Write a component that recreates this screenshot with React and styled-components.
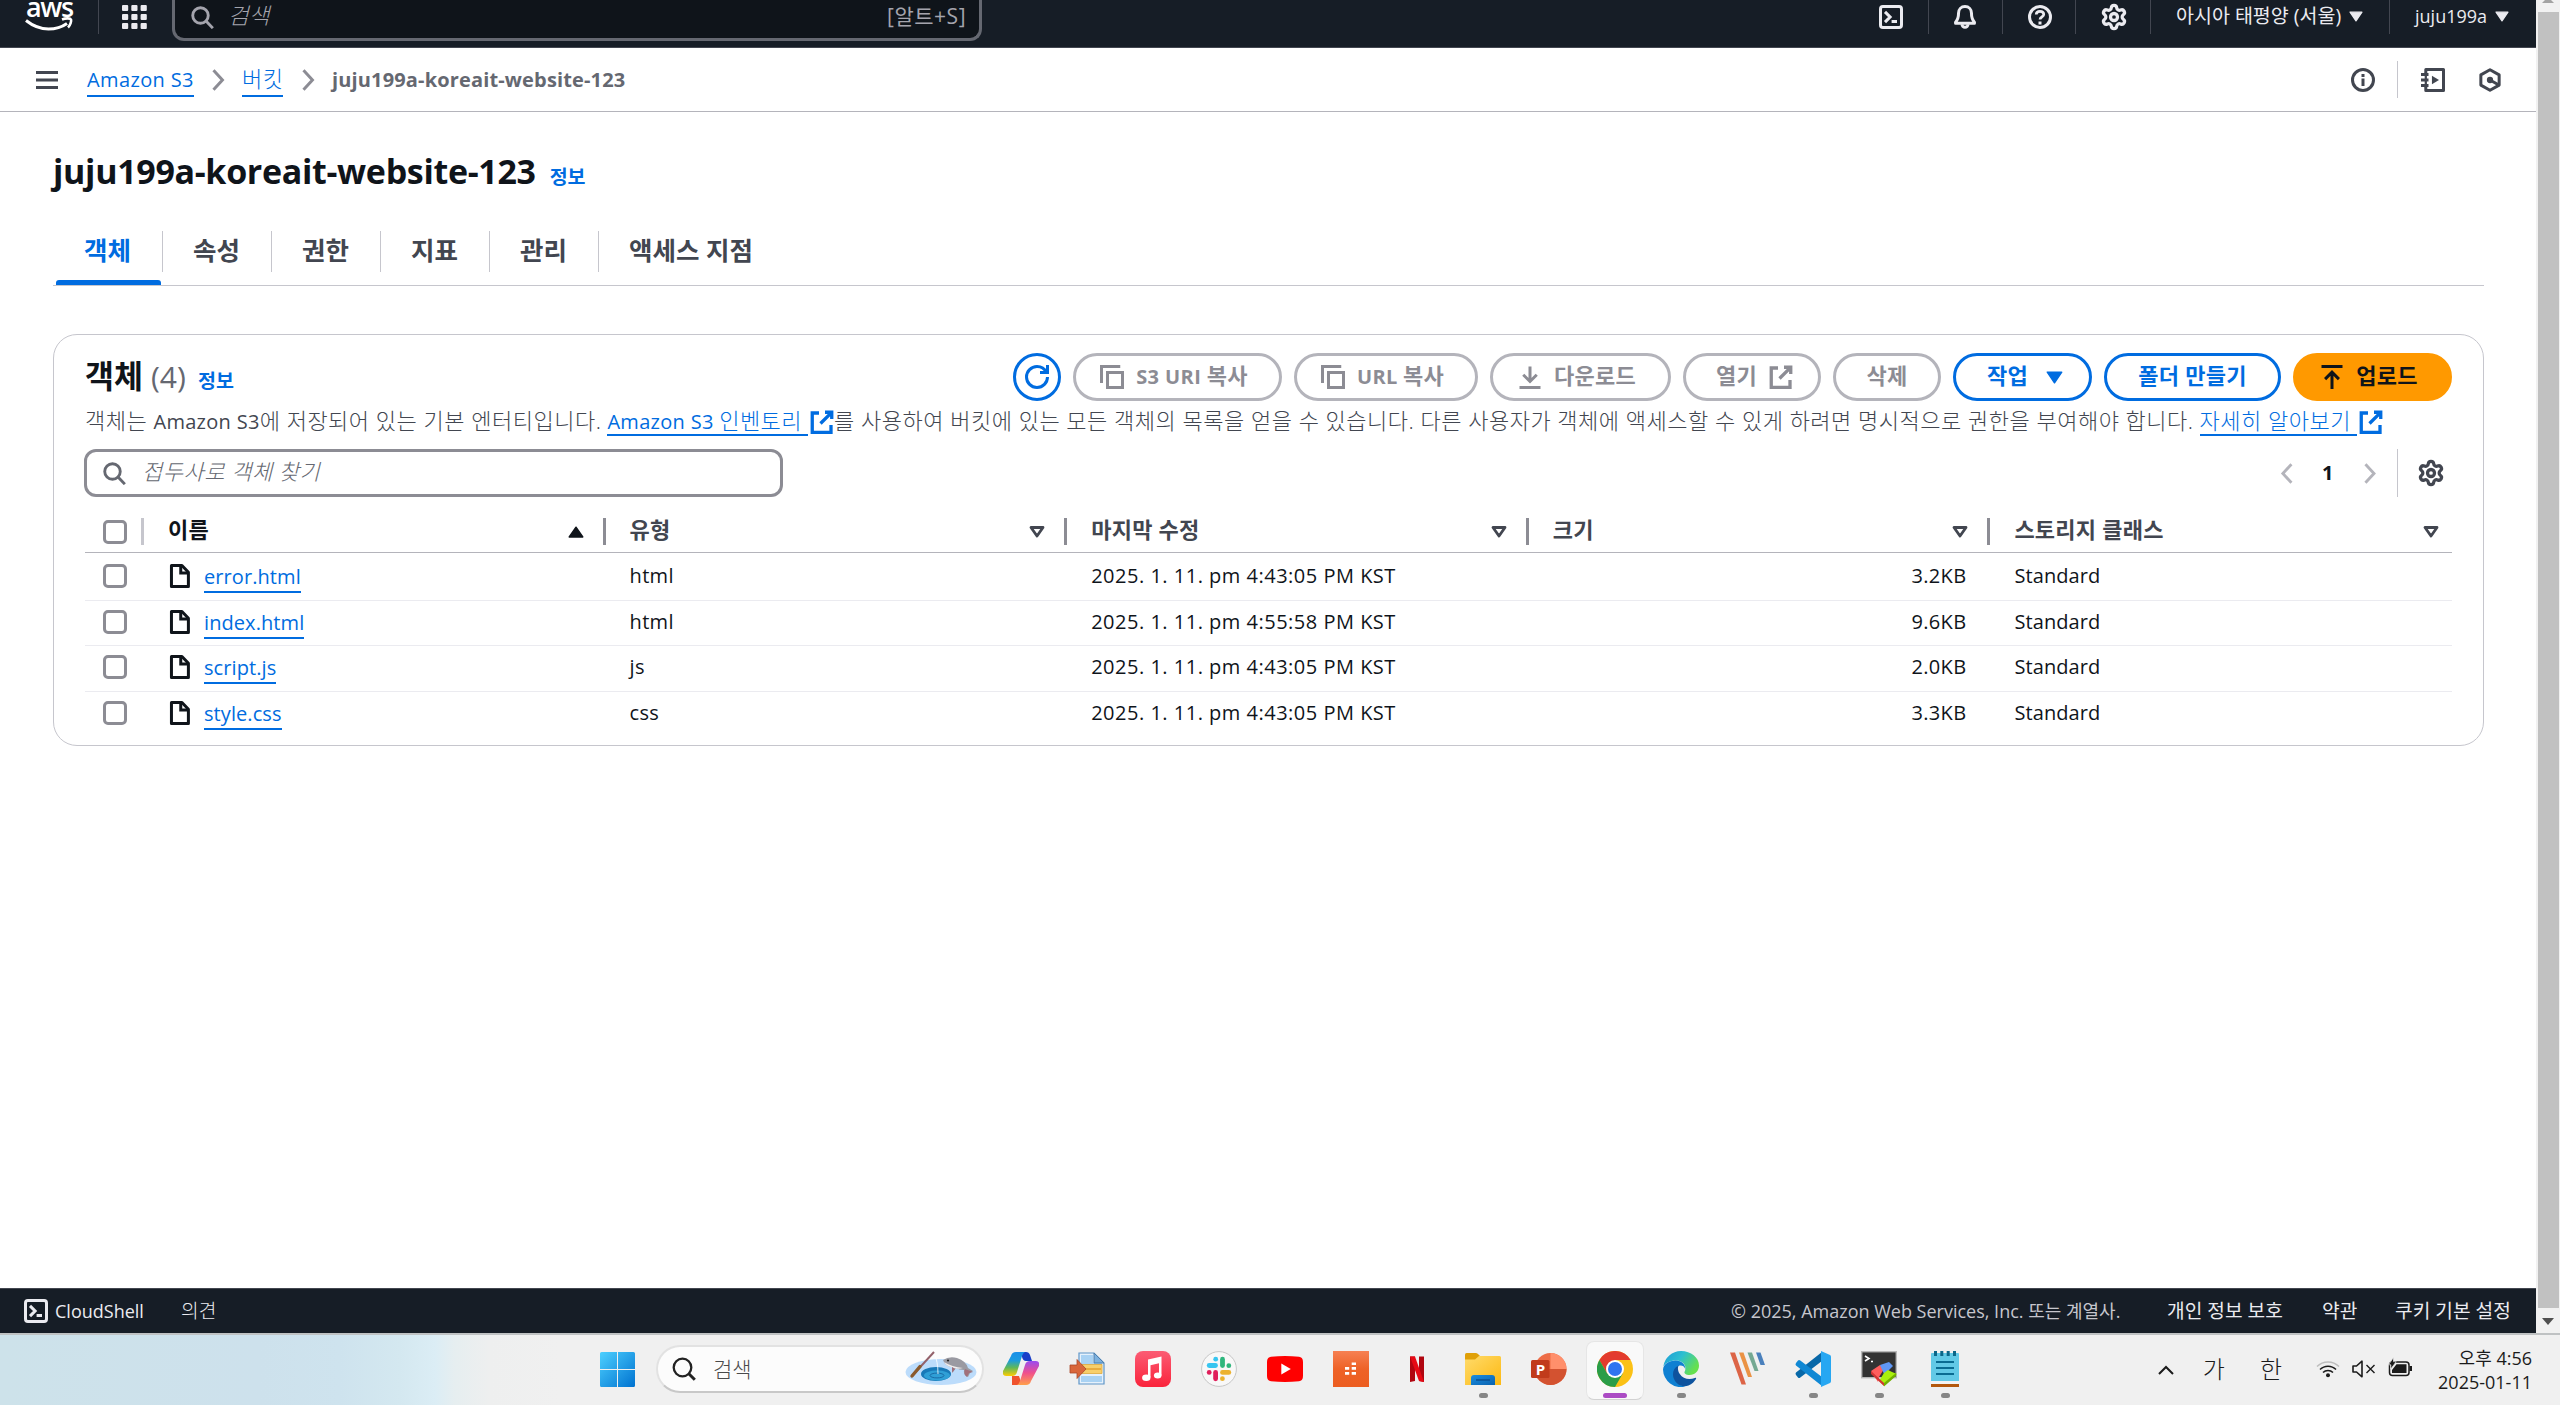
import React from "react";
import styled, { createGlobalStyle, css } from "styled-components";
import { Settings } from "lucide-react";

const sans = `"Open Sans", "Noto Sans CJK KR", sans-serif`;

const GlobalStyle = createGlobalStyle`
  * { box-sizing: border-box; }
  html, body { margin: 0; padding: 0; background: #fff; overflow: hidden; }
  body { font-family: ${sans}; font-size: 20px; color: #0f141a; }
  svg { display: block; flex: none; }
  a { color: #006ce0; text-decoration: none; }
`;

const Desktop = styled.div`
  width: 2560px;
  height: 1405px;
  display: flex;
  flex-direction: column;
  overflow: hidden;
`;
const Browser = styled.div`
  display: flex;
  height: 1333px;
`;
const Page = styled.div`
  width: 2536px;
  height: 1333px;
  display: flex;
  flex-direction: column;
`;

/* ---------- text ---------- */
const Text = styled.span`
  white-space: nowrap;
  font-size: ${(p) => p.$size || 20}px;
  font-weight: ${(p) => p.$weight || 400};
  color: ${(p) => p.$color || "inherit"};
  letter-spacing: ${(p) => p.$ls || 0}px;
  line-height: ${(p) => p.$lh || 28}px;
  font-style: ${(p) => (p.$italic ? "italic" : "normal")};
`;
const Hangul = styled.span`
  font-size: 1.1em;
  line-height: 1;
  font-weight: ${(p) => (p.$bold ? "inherit" : 300)};
  letter-spacing: ${(p) => (p.$bold ? 0.25 : 0.5)}px;
`;
/* Korean runs are set slightly larger than the Latin text around them. */
const mixed = (s, bold) =>
  s.split(/([가-힣][가-힣 .,]*)/).filter(Boolean).map((part, i) =>
    /^[가-힣]/.test(part) ? <Hangul key={i} $bold={bold}>{part}</Hangul> : part
  );
const Label = ({ children, ...p }) => <Text {...p}>{mixed(children, p.$weight === 700)}</Text>;

const Slot = styled.div`
  display: flex;
  align-items: center;
  flex: none;
  width: ${(p) => p.$w}px;
  height: ${(p) => (p.$h ? `${p.$h}px` : "100%")};
  color: ${(p) => p.$color || "inherit"};
`;

/* ---------- top navigation ---------- */
const TopNav = styled.header`
  height: 48px;
  flex: none;
  display: flex;
  align-items: flex-start;
  background: #161d26;
  border-bottom: 1px solid #424650;
  color: #ebebf0;
`;
const NavCell = styled.div`
  height: 34px;
  flex: none;
  width: ${(p) => p.$w}px;
  padding-left: ${(p) => p.$pl || 0}px;
  padding-top: ${(p) => p.$pt || 0}px;
  border-right: ${(p) => (p.$line ? "1px solid #424650" : "0")};
  display: flex;
  align-items: flex-start;
`;
const NavLabel = styled.div`
  flex: none;
  width: ${(p) => p.$w}px;
  padding-top: 2px;
  display: flex;
`;
const GlobalSearch = styled.div`
  width: 810px;
  height: 41px;
  flex: none;
  display: flex;
  align-items: flex-start;
  justify-content: space-between;
  padding: 2px 13px 0 16px;
  background: #0f141a;
  border: 3px solid #656871;
  border-top: 0;
  border-radius: 0 0 12px 12px;
  color: #a4a4ad;
`;
const SearchLeft = styled.div`
  display: flex;
  gap: 13px;
`;
const Spacer = styled.div`
  flex: 1;
`;
const SearchGap = styled.div`
  flex: none;
  width: 4px;
`;

/* ---------- breadcrumb bar ---------- */
const CrumbBar = styled.div`
  height: 64px;
  flex: none;
  display: flex;
  align-items: center;
  padding: 0 34px 0 36px;
  border-bottom: 1px solid #b4b4bb;
`;
const Crumbs = styled.nav`
  display: flex;
  align-items: center;
  margin-left: 29px;
`;
const underlined = css`
  border-bottom: 2px solid #006ce0;
`;
const CrumbLink = styled.a`
  ${underlined}
  height: 31px;
  margin-top: 3px;
  line-height: 28px;
  white-space: nowrap;
  letter-spacing: 0.37px;
`;
const ToolDivider = styled.i`
  width: 1px;
  height: 37px;
  background: #c6c6cd;
  margin: 0 23px 0 22px;
`;

/* ---------- content ---------- */
const Content = styled.main`
  flex: 1;
  padding: 37px 52px 0 53px;
`;
const TitleRow = styled.div`
  display: flex;
  align-items: baseline;
  gap: 14px;
  height: 44px;
`;
const Tabs = styled.div`
  display: flex;
  margin-top: 30px;
  height: 63px;
  border-bottom: 1px solid #c6c6cd;
`;
const Tab = styled.div`
  height: 63px;
  padding-left: ${(p) => (p.$first ? 3 : 0)}px;
`;
const TabLabel = styled.div`
  height: 41px;
  margin-top: 8px;
  width: ${(p) => p.$w}px;
  padding-left: ${(p) => p.$pl}px;
  border-right: ${(p) => (p.$last ? 0 : "1px solid #c6c6cd")};
`;
const TabBar = styled.div`
  width: 105px;
  height: 5px;
  margin-top: 8px;
  border-radius: 3px 3px 0 0;
  background: #006ce0;
`;
const Card = styled.section`
  margin-top: 48px;
  height: 412px;
  border: 1px solid #c6c6cd;
  border-radius: 24px;
  padding: 18px 31px 0;
`;
const CardHead = styled.div`
  display: flex;
  height: 48px;
  justify-content: space-between;
`;
const CardTitle = styled.div`
  display: flex;
  align-items: baseline;
  margin-top: -2px;
`;
const Actions = styled.div`
  display: flex;
  gap: 12px;
`;
const tones = {
  disabled: css`
    border: 3px solid #b4b4bb;
    color: #8c8c94;
  `,
  normal: css`
    border: 3px solid #006ce0;
    color: #006ce0;
  `,
  primary: css`
    border: 3px solid #ff9900;
    color: #0f141a;
  `,
};
const Button = styled.button`
  ${(p) => tones[p.$tone]}
  width: ${(p) => p.$w}px;
  height: 48px;
  border-radius: 24px;
  padding: 0 ${(p) => (p.$icon === "left" ? 7 : 0)}px 0 ${(p) => (p.$icon === "right" ? 5 : 0)}px;
  background: ${(p) => (p.$tone === "primary" ? "#ff9900" : "#fff")};
  display: flex;
  align-items: center;
  justify-content: center;
  gap: ${(p) => p.$gap || 12}px;
  font-family: inherit;
`;
const Desc = styled.p`
  margin: 7px 0 0;
  height: 34px;
  display: flex;
  align-items: flex-start;
  white-space: nowrap;
  font-size: 20px;
  line-height: 28px;
  color: #424650;
`;
const DescLink = styled.a`
  ${underlined}
  display: block;
  height: 28px;
  letter-spacing: 0.3px;
  padding-right: 6px;
  margin-left: 6px;
  margin-right: 2px;
`;
const FilterRow = styled.div`
  height: 48px;
  margin-top: 7px;
  display: flex;
  align-items: center;
`;
const FilterInput = styled.div`
  width: 699px;
  height: 48px;
  margin-left: -1px;
  border: 3px solid #8c8c94;
  border-radius: 12px;
  display: flex;
  align-items: center;
  gap: 16px;
  padding-left: 16px;
  color: #656871;
`;
const PageDivider = styled.i`
  width: 1px;
  height: 48px;
  background: #c6c6cd;
  margin: 0 21px 0 20px;
`;

/* ---------- table ---------- */
const gridCols = css`
  display: grid;
  grid-template-columns: 59px repeat(4, 461.6px) 1fr;
`;
const HeadRow = styled.div`
  ${gridCols}
  height: 56px;
  border-bottom: 1px solid #b4b4bb;
  padding-top: 21px;
`;
const HeadCell = styled.div`
  height: 27px;
  display: flex;
  align-items: center;
  justify-content: space-between;
  padding-left: ${(p) => (p.$check ? 18 : 24)}px;
  padding-right: ${(p) => (p.$last ? 13 : 19)}px;
  border-right: ${(p) => (p.$last ? "0" : `3px solid ${p.$check ? "#c6c6cd" : "#8c8c94"}`)};
  color: ${(p) => (p.$active ? "#0f141a" : "#424650")};
`;
const HeadText = styled.div`
  display: flex;
  height: 29px;
  margin-top: -1px;
`;
const Row = styled.div`
  ${gridCols}
  height: ${(p) => p.$h}px;
  padding-top: ${(p) => p.$pt}px;
  border-bottom: ${(p) => (p.$last ? "0" : "1px solid #ebebf0")};
`;
const Cell = styled.div`
  height: 24px;
  display: flex;
  align-items: center;
  gap: 12px;
  padding-left: ${(p) => (p.$check ? 18 : 24)}px;
  justify-content: ${(p) => (p.$end ? "flex-end" : "flex-start")};
  padding-right: ${(p) => (p.$end ? 24 : 0)}px;
`;
const Checkbox = styled.span`
  width: 24px;
  height: 24px;
  flex: none;
  border: 3px solid #8c8c94;
  border-radius: 5px;
  background: #fff;
`;
const FileLink = styled.a`
  ${underlined}
  height: 29px;
  margin-top: 4px;
  line-height: 26px;
  font-size: 20px;
  letter-spacing: 0.08px;
`;

/* ---------- footer and scrollbar ---------- */
const Footer = styled.footer`
  height: 45px;
  flex: none;
  display: flex;
  align-items: center;
  padding-left: 24px;
  background: #161d26;
  border-top: 1px solid #424650;
  color: #ebebf0;
`;
const Scrollbar = styled.div`
  width: 24px;
  height: 1333px;
  background: #f1f1f1;
  display: flex;
  flex-direction: column;
  align-items: center;
`;
const ScrollThumb = styled.div`
  width: 21px;
  height: 1296px;
  margin: 9px 0 10px;
  background: #c1c1c1;
`;

/* ---------- taskbar ---------- */
const Taskbar = styled.div`
  height: 72px;
  display: flex;
  align-items: flex-start;
  border-top: 2px solid #bfc2c3;
  background: linear-gradient(
    90deg,
    #cde2ea 0,
    #cde1ec 260px,
    #cee3ee 340px,
    #d4e8f0 400px,
    #dbedf5 435px,
    #e6eef0 455px,
    #eeefef 490px,
    #f0f0f0 560px
  );
`;
const StartSlot = styled.div`
  width: 656px;
  padding: 17px 0 0 600px;
`;
const TaskSearch = styled.div`
  width: 328px;
  height: 48px;
  margin-top: 10px;
  border: 2px solid #e2e2e2;
  border-bottom-color: #c8c8c8;
  border-radius: 24px;
  background: #fcfcfc;
  display: flex;
  align-items: center;
  padding-left: 14px;
`;
const AppCell = styled.div`
  width: 66px;
  height: 68px;
  padding-top: 6px;
  display: flex;
  justify-content: center;
`;
const AppTile = styled.div`
  width: 58px;
  height: 59px;
  border-radius: 8px;
  padding-top: ${(p) => (p.$active ? 9 : 10)}px;
  display: flex;
  flex-direction: column;
  align-items: center;
  border: ${(p) => (p.$active ? "1px solid #e6e6e6" : "0")};
  border-bottom-color: #d2d2d2;
  background: ${(p) => (p.$active ? "#f9f9f9" : "transparent")};
`;
const Indicator = styled.i`
  width: ${(p) => (p.$active ? 24 : 9)}px;
  height: 5px;
  margin-top: 6px;
  border-radius: 3px;
  background: ${(p) => (p.$active ? "#ab4bc4" : "#868686")};
`;
const Tray = styled.div`
  flex: 1;
  display: flex;
  justify-content: flex-end;
  color: #1b1b1b;
`;
const TrayItem = styled.div`
  padding-top: ${(p) => p.$pt}px;
  margin-right: ${(p) => p.$mr || 0}px;
`;
const Clock = styled.div`
  display: flex;
  flex-direction: column;
  align-items: flex-end;
  padding-top: 11px;
  margin-right: 28px;
  width: 96px;
`;

/* ---------- icons ---------- */
const Ico = ({ s = 24, sw = 2, children, ...rest }) => (
  <svg width={s} height={s} viewBox="0 0 16 16" fill="none" stroke="currentColor" strokeWidth={sw} {...rest}>
    {children}
  </svg>
);
const SearchIcon = ({ s = 23 }) => (
  <Ico s={s}>
    <circle cx="6.6" cy="6.6" r="5.4" />
    <path d="m10.6 10.6 4.6 4.8" />
  </Ico>
);
const ShellIcon = () => (
  <Ico>
    <rect x="1" y="1" width="14" height="14" rx="1.6" />
    <path d="M4 4.600 7.400 8 4 11.400M8.400 11h3.600" />
  </Ico>
);
const BellIcon = () => (
  <Ico>
    <path strokeLinejoin="round" d="M8 1c2.600 0 4.300 2 4.300 4.400 0 3.400.6 4.600 2 6.100v.7H1.700v-.7c1.400-1.500 2-2.700 2-6.100C3.700 3 5.400 1 8 1Z" />
    <path d="M6 12.800a2 2 0 0 0 4 0" />
  </Ico>
);
const HelpIcon = () => (
  <Ico>
    <circle cx="8" cy="8" r="7" />
    <path d="M5.500 6.400C5.500 5 6.500 4.200 8 4.200s2.500.9 2.500 2.100c0 1.500-2.500 1.800-2.500 3.400" strokeWidth="1.800" />
    <path d="M8 11v2" />
  </Ico>
);
const InfoIcon = () => (
  <Ico>
    <circle cx="8" cy="8" r="7" />
    <path d="M8 4v2M8 7v5" />
  </Ico>
);
const NotebookIcon = () => (
  <Ico>
    <path d="M3.200 3.500V1h11.800v14H3.200v-2.500" strokeLinejoin="round" />
    <path d="M3.200 3v10" strokeWidth="1.500" />
    <path d="M0 4.400h5M0 8h5M0 11.600h5" />
    <path d="M7.300 5.200v5.600L12 8z" fill="currentColor" stroke="none" />
  </Ico>
);
const HexIcon = () => (
  <Ico>
    <path d="M8 1.200 14.100 4.600v6.800L8 14.800 1.900 11.400V4.600z" strokeLinejoin="round" />
    <circle cx="8" cy="8" r="2.100" fill="currentColor" stroke="none" />
    <path d="m8 8 5.600 3.200" />
  </Ico>
);
const RefreshIcon = () => (
  <Ico>
    <path d="M15 8c0 3.870-3.130 7-7 7s-7-3.130-7-7 3.130-7 7-7c2.790 0 5.200 1.630 6.330 4" />
    <path d="M10 5h5V0" />
  </Ico>
);
const CopyIcon = () => (
  <Ico>
    <path d="M13.500 1H1v11" />
    <rect x="5" y="5" width="10" height="10" />
  </Ico>
);
const DownloadIcon = () => (
  <Ico>
    <path d="M8 1v10M3.500 6.500 8 11l4.500-4.500M1 15h14" />
  </Ico>
);
const UploadIcon = () => (
  <Ico>
    <path d="M1 1h14M8 16V5M3.400 9.400 8 4.800l4.600 4.600" />
  </Ico>
);
const ExternalIcon = () => (
  <Ico sw={2.2}>
    <path d="M14 10v5H1.500V2H6M10 1.500h4.500V6M14.300 1.700 7 9" />
  </Ico>
);
const Chevron = ({ left, color = "#8c8c94", s = 24, sw = 2 }) => (
  <svg width={s * 0.56} height={s} viewBox="0 0 9 16" fill="none" stroke={color} strokeWidth={sw}>
    <path d={left ? "M8 1.500 2 8l6 6.500" : "M1 1.500 7 8l-6 6.500"} />
  </svg>
);
const FileIcon = () => (
  <Ico>
    <path d="M2.300 1h7l4.300 4.500V15H2.300z" strokeLinejoin="round" />
    <path d="M8.500 1v5h5" />
  </Ico>
);
const Triangle = ({ w = 16, h = 12, up, open, color = "currentColor" }) => (
  <svg width={w} height={h} viewBox="0 0 16 12">
    <path
      d={up ? "M8 1.200 14.800 11H1.200z" : open ? "M2 1.500h12L8 10z" : "M1.200 1h13.600L8 11z"}
      fill={open ? "none" : color}
      stroke={color}
      strokeWidth={open ? 2.8 : 1.4}
      strokeLinejoin="round"
    />
  </svg>
);
const GearIcon = () => <Settings size={28} strokeWidth={2.8} />;
const GearSlot = styled.div`
  width: 35px;
  display: flex;
  margin-left: -2px;
  color: #424650;
`;
const AwsSmile = () => (
  <svg width="48" height="15" viewBox="0 0 48 15" fill="none" stroke="#fff">
    <path d="M1 3.500C8 9 15 12 23.500 12c7 0 13.500-2 18.500-5.500" strokeWidth="3" />
    <path d="M37 2.500c4-1.600 8.300-1.300 9 0 .5 1.300-.5 5.500-3 8" strokeWidth="2.600" />
  </svg>
);
const AwsMark = styled.div`
  width: 74px;
  height: 34px;
  display: flex;
  flex-direction: column;
  align-items: flex-start;
`;
const AwsWord = styled.span`
  height: 18px;
  margin: -2px 0 1px 1px;
  font: 600 27px/18px "Open Sans", sans-serif;
  letter-spacing: -1.4px;
  color: #fff;
`;

/* ---------- taskbar icons ---------- */
const App = ({ children, vb = "0 0 36 36" }) => (
  <svg width="36" height="36" viewBox={vb}>
    {children}
  </svg>
);
const WindowsIcon = () => (
  <svg width="35" height="35" viewBox="0 0 35 35">
    <defs>
      <linearGradient id="win" x1="0" y1="0" x2="1" y2="1">
        <stop offset="0" stopColor="#4cd0ff" />
        <stop offset="1" stopColor="#0072d0" />
      </linearGradient>
    </defs>
    <path
      fill="url(#win)"
      d="M1.500 0H17v17H0V1.500Q0 0 1.500 0ZM18 0h15.500Q35 0 35 1.500V17H18ZM0 18h17v17H1.500Q0 35 0 33.500ZM18 18h17v15.500q0 1.500-1.500 1.500H18Z"
    />
  </svg>
);
const FishingArt = () => (
  <svg width="72" height="36" viewBox="0 0 72 36">
    <ellipse cx="36" cy="21" rx="35.500" ry="13" fill="#bcdcfb" />
    <ellipse cx="31" cy="23" rx="15" ry="7" fill="#1879b8" />
    <ellipse cx="32" cy="24.500" rx="13" ry="5" fill="#2f9fd6" />
    <ellipse cx="32" cy="24.500" rx="7" ry="2.400" fill="none" stroke="#1a6ca8" />
    <path d="M29 2q4 8 4 21" stroke="#fff" fill="none" strokeWidth=".8" />
    <path d="M7 25 29 1" stroke="#93616a" strokeWidth="2" />
    <path d="M7 25 15 15.500" stroke="#8a5a2c" strokeWidth="3.400" strokeLinecap="round" />
    <path d="M38 9q6-4 14-2 9 3 11 10l5 3-3 2-2 4q-5-2-4-7-5 0-8-2l-3 4-1-5q-7-1-9-7Z" fill="#9a9aa2" />
    <path d="M39 11q8 5 19 6-6 2-12-1-5-1-7-5Z" fill="#efecec" />
    <path d="m60 18 8 3-4 1-2 4q-4-3-2-8ZM47 16v6l3-4Z" fill="#a0707c" />
    <circle cx="43" cy="9.500" r="1.100" fill="#222" />
  </svg>
);
const CopilotIcon = () => (
  <App>
    <defs>
      <linearGradient id="cpA" x1="0" y1="0" x2="0" y2="1">
        <stop offset="0" stopColor="#1a8fe8" />
        <stop offset=".35" stopColor="#1b9be0" />
        <stop offset=".65" stopColor="#5fb85a" />
        <stop offset="1" stopColor="#ffcc00" />
      </linearGradient>
      <linearGradient id="cpB" x1="0" y1="0" x2="0" y2="1">
        <stop offset="0" stopColor="#9a4cf0" />
        <stop offset=".5" stopColor="#f0508c" />
        <stop offset="1" stopColor="#ffa04a" />
      </linearGradient>
    </defs>
    <path d="M18 1h5q3 0 4 3l2 6h-6q-3 0-4-4Z" fill="#1a3fc8" />
    <path d="M9 34h6l3-3-2-6H9Z" fill="#f0522c" />
    <path d="M8 5q1-4 5-4h9q-2 1-3 4l-5 16q-1 4-5 4H3q-4 0-3-5Z" fill="url(#cpA)" />
    <path d="M28 30q-1 4-5 4h-9q2-1 3-4l5-16q1-4 5-4h6q4 0 3 5Z" fill="url(#cpB)" />
  </App>
);
const TransferIcon = () => (
  <App>
    <path d="M10 2h15l10 10v21H10Z" fill="#e6f1fb" stroke="#5f96c8" strokeWidth="1.200" />
    <path d="M12 4h12v8h9v2H12ZM12 25h21v6H12Z" fill="#a9d2f3" />
    <path d="M25 2v10h10Z" fill="#7db1de" stroke="#4d7fae" />
    <path d="M10 13.500h23v9H10Z" fill="#f7cf6b" stroke="#e0a83a" strokeWidth=".8" />
    <path d="M16 18h16" stroke="#e4a02f" strokeWidth="1.500" />
    <path d="M1 14h7V8.500L17 18l-9 9.500V22H1Z" fill="#d9663a" stroke="#a8482a" strokeWidth=".8" />
  </App>
);
const MusicIcon = () => (
  <App>
    <defs>
      <linearGradient id="mus" x1="0" y1="0" x2="0" y2="1">
        <stop offset="0" stopColor="#fb5c74" />
        <stop offset="1" stopColor="#fa233b" />
      </linearGradient>
    </defs>
    <rect width="36" height="36" rx="8" fill="url(#mus)" />
    <path d="M13 8.500 26.500 5.500V24.500h-2.500V12.200l-8.500 2V26.500H13Z" fill="#fff" />
    <ellipse cx="11.300" cy="26.800" rx="4.200" ry="3.200" fill="#fff" />
    <ellipse cx="22.700" cy="24.600" rx="3.800" ry="3" fill="#fff" />
  </App>
);
const SlackIcon = () => (
  <App>
    <circle cx="18" cy="18" r="17.400" fill="#f8f8f8" stroke="#c6c6c6" />
    <g strokeWidth="4.800" strokeLinecap="round">
      <path d="M8.200 14.500h6.300" stroke="#36c5f0" />
      <path d="M14.700 8.200h.01" stroke="#36c5f0" />
      <path d="M21.500 8.200v6.300" stroke="#2eb67d" />
      <path d="M27.800 14.700v.01" stroke="#2eb67d" />
      <path d="M21.500 21.400h6.300" stroke="#ecb22e" />
      <path d="M21.400 27.700h.01" stroke="#ecb22e" />
      <path d="M14.600 21.500v6.300" stroke="#e01e5a" />
      <path d="M8.200 21.400h.01" stroke="#e01e5a" />
    </g>
  </App>
);
const YoutubeIcon = () => (
  <App>
    <path d="M4 5.800q14-1.400 28 0 3.600.4 3.900 4 .5 8.200 0 16.400-.3 3.600-3.900 4-14 1.400-28 0-3.600-.4-3.900-4-.5-8.200 0-16.400.3-3.600 3.900-4Z" fill="#f00" />
    <path d="m14.300 12.500 9.500 5.500-9.500 5.500Z" fill="#fff" />
  </App>
);
const DeezerIcon = () => (
  <App>
    <defs>
      <linearGradient id="dz" x1="0" y1="0" x2="0" y2="1">
        <stop offset="0" stopColor="#f68052" />
        <stop offset=".5" stopColor="#ee6227" />
        <stop offset="1" stopColor="#ec5d20" />
      </linearGradient>
    </defs>
    <rect width="36" height="36" fill="url(#dz)" />
    <path d="M18.700 11.500h4.300V14h-4.300ZM18.700 16h4.300v2.700h-4.300ZM12 16h4.200v2.700H12ZM12 21h4.200v2.700H12ZM18.700 21h4.300v2.700h-4.300Z" fill="#fff" />
  </App>
);
const NetflixIcon = () => (
  <App>
    <path d="M11 5.500h5V30l-5 1ZM20 5.500h5V31l-5-1Z" fill="#b00610" />
    <path d="M11 5.500h5L25 31l-5-1Z" fill="#e60914" />
  </App>
);
const FolderIcon = () => (
  <App>
    <defs>
      <linearGradient id="fd" x1="0" y1="0" x2="1" y2="1">
        <stop offset="0" stopColor="#ffdb6b" />
        <stop offset="1" stopColor="#fdb912" />
      </linearGradient>
      <linearGradient id="fb" x1="0" y1="0" x2="1" y2="1">
        <stop offset="0" stopColor="#1b8de0" />
        <stop offset="1" stopColor="#0a62ae" />
      </linearGradient>
    </defs>
    <path d="M0 3.500Q0 2 1.500 2h9q1.500 0 2.500 1l2 2v4H0Z" fill="#e0a007" />
    <path d="M0 8.500h10L14 5h20.500Q36 5 36 6.500V34H0Z" fill="url(#fd)" />
    <path d="M6 34v-7q0-3 3-3h18q3 0 3 3v7Z" fill="url(#fb)" />
    <path d="M11 29h14" stroke="#0a4f92" strokeWidth="1.500" />
  </App>
);
const TileLetter = styled.span`
  grid-area: 1 / 1;
  width: 19px;
  margin-top: 8px;
  font: 700 15px/20px "Open Sans", sans-serif;
  text-align: center;
  color: #fff;
  z-index: 1;
`;
const Stack = styled.div`
  display: grid;
  width: 36px;
  height: 36px;
  > svg { grid-area: 1 / 1; }
`;
const PowerPointIcon = () => (
  <Stack>
    <App>
      <circle cx="19.500" cy="18" r="16" fill="#ed6c47" />
      <path d="M19.500 2a16 16 0 0 1 16 16h-16Z" fill="#ff8f6b" />
      <path d="M3.500 18a16 16 0 0 0 32 0Z" fill="#d35230" />
      <rect y="9" width="18.500" height="18" rx="1.500" fill="#c13b1b" />
    </App>
    <TileLetter>P</TileLetter>
  </Stack>
);
const ChromeIcon = () => (
  <App>
    <circle cx="18" cy="18" r="18" fill="#fbc116" />
    <path d="M18 9h15.600A18 18 0 0 0 2.400 9l7.800 13.500Z" fill="#e33b2e" />
    <path d="M2.400 9A18 18 0 0 0 18 36l7.800-13.500L10.200 22.500Z" fill="#2a9d48" />
    <circle cx="18" cy="18" r="9" fill="#fff" />
    <circle cx="18" cy="18" r="7" fill="#2f74f0" />
  </App>
);
const EdgeIcon = () => (
  <App>
    <defs>
      <linearGradient id="eg" x1="0" y1="0" x2="1" y2=".5">
        <stop offset="0" stopColor="#1a9ad8" />
        <stop offset=".5" stopColor="#2dbfd0" />
        <stop offset="1" stopColor="#66e04e" />
      </linearGradient>
    </defs>
    <path d="M.3 15.500A18 18 0 0 1 18 0c10 0 18 6.500 18 14.500 0 5.500-4 9.500-9.500 9.500-3.500 0-5.500-1.500-5-3 2.500-4 .5-11.500-9-11.500C7 9.500 2.500 12 .3 15.500Z" fill="url(#eg)" />
    <path d="M0 18.500C.5 13 6 9.500 12.500 9.500c6.500 0 10 4.500 9.800 8.500-1-3-3.500-4-5.800-3.500-5 2-7 8-3.500 14 2 3.500 5.500 6.500 9.500 7A18 18 0 0 1 0 18.500Z" fill="#0f80d2" />
    <path d="M15.500 14.500C10 17 8.500 23.500 11.500 29c3 5.500 9 7.500 14 5.500 3.500-1.500 6-4 7.500-6.500.5-1-.3-1.500-1.200-1-6 2.500-12 .5-15-4-2-3-2.300-6-1.300-8.500Z" fill="#0e539e" />
  </App>
);
const StripesIcon = () => (
  <App>
    <path d="M1 1.500h5L17 33.500h-4.500Z" fill="#dc6446" />
    <path d="M10 1.500h4.500L23 26h-4Z" fill="#ea9244" />
    <path d="M18.500 1.500H23l6.500 18.500h-4Z" fill="#74a892" />
    <path d="M27 1.500h4.500L36 14h-4.500Z" fill="#4a80bc" />
  </App>
);
const CodeIcon = () => (
  <App>
    <path d="m1 24 2 2.500q1 1 2.300 0L27 10V1L1 21.500q-1 1 0 2.500Z" fill="#0868a8" />
    <path d="m1 12 2-2.500q1-1 2.300 0L27 26v9L1 14.500q-1-1 0-2.500Z" fill="#1088d4" />
    <path d="m26 0 9 4q1 .5 1 2v24q0 1.500-1 2l-9 4Z" fill="#27a7f2" />
  </App>
);
const TerminalIcon = () => (
  <App>
    <rect x=".7" y=".7" width="34.600" height="26" fill="#333" stroke="#b8b8b8" strokeWidth="1.400" />
    <path d="m4 5 4 2.500L4 10M10 10.500h2" stroke="#fff" strokeWidth="1.600" fill="none" />
    <path d="m10 20 9-6 4 4-5 8-1 5Z" fill="#ff5d5d" />
    <path d="m19 14 9-3 4 4-5 5-4 3Z" fill="#5f97f6" />
    <path d="m23 22 4-3 4 2 5 2-13 12-5-5Z" fill="#a9f00c" />
    <path d="m10 20 13 12v3L10 23Z" fill="#d23434" />
    <path d="m23 32 12-10v3L23 35.500Z" fill="#72b000" />
  </App>
);
const NotepadIcon = () => (
  <App>
    <path d="M4 3q0-1 1-1h26q1 0 1 1v28H4Z" fill="#62c9e6" />
    <path d="M4 30h28v3H4Z" fill="#f4f4f4" />
    <path d="M4 33h28v3H4Z" fill="#b4590e" />
    <path d="M8.500 0v5M14.800 0v5M21.200 0v5M27.500 0v5" stroke="#0b6688" strokeWidth="3" />
    <path d="M9 11h18M9 17h18M9 23h18" stroke="#0a6c92" strokeWidth="1.800" />
  </App>
);
const WifiIcon = () => (
  <svg width="24" height="18" viewBox="0 0 24 18" fill="none" stroke="#1b1b1b" strokeWidth="1.500">
    <path d="M1 6.500a15.500 15.500 0 0 1 22 0" stroke="#bdbdbd" />
    <path d="M4 9.500a11.300 11.300 0 0 1 16 0M7 12.500a7 7 0 0 1 10 0" />
    <circle cx="12" cy="15.300" r="2" fill="#1b1b1b" stroke="none" />
  </svg>
);
const MuteIcon = () => (
  <svg width="24" height="18" viewBox="0 0 24 18" fill="none" stroke="#1b1b1b" strokeWidth="1.600">
    <path d="M1 6h3.500L10 1.200v15.600L4.500 12H1Z" strokeLinejoin="round" />
    <path d="m14.500 5 8 8M22.500 5l-8 8" strokeWidth="1.400" />
  </svg>
);
const BatteryIcon = () => (
  <svg width="25" height="21" viewBox="0 0 25 21">
    <rect x="1.500" y="5" width="19.500" height="13.500" rx="3" fill="none" stroke="#1b1b1b" strokeWidth="1.500" />
    <path d="M4 13 8.500 7.200h10V16H4Z" fill="#1b1b1b" />
    <path d="M21.500 9H24v5h-2.500Z" fill="#1b1b1b" />
    <path d="M5.500.5v4.200H8.200L2.800 12V7.800H.5Z" fill="#1b1b1b" stroke="#f0f0f0" strokeWidth=".7" />
  </svg>
);

const apps = [
  { id: "copilot", Icon: CopilotIcon },
  { id: "transfer", Icon: TransferIcon },
  { id: "music", Icon: MusicIcon },
  { id: "slack", Icon: SlackIcon },
  { id: "youtube", Icon: YoutubeIcon },
  { id: "deezer", Icon: DeezerIcon },
  { id: "netflix", Icon: NetflixIcon },
  { id: "explorer", Icon: FolderIcon, running: true },
  { id: "powerpoint", Icon: PowerPointIcon },
  { id: "chrome", Icon: ChromeIcon, running: true, active: true },
  { id: "edge", Icon: EdgeIcon, running: true },
  { id: "stripes", Icon: StripesIcon },
  { id: "code", Icon: CodeIcon, running: true },
  { id: "terminal", Icon: TerminalIcon, running: true },
  { id: "notepad", Icon: NotepadIcon, running: true },
];

const tabs = ["객체", "속성", "권한", "지표", "관리", "액세스 지점"];
const columns = ["이름", "유형", "마지막 수정", "크기", "스토리지 클래스"];
const files = [
  { name: "error.html", type: "html", date: "2025. 1. 11. pm 4:43:05 PM KST", size: "3.2KB", h: 48, pt: 11 },
  { name: "index.html", type: "html", date: "2025. 1. 11. pm 4:55:58 PM KST", size: "9.6KB", h: 45, pt: 9 },
  { name: "script.js", type: "js", date: "2025. 1. 11. pm 4:43:05 PM KST", size: "2.0KB", h: 46, pt: 9 },
  { name: "style.css", type: "css", date: "2025. 1. 11. pm 4:43:05 PM KST", size: "3.3KB", h: 46, pt: 9 },
];

export default function S3BucketPage() {
  return (
    <Desktop>
      <GlobalStyle />
      <Browser>
        <Page>
          <TopNav>
            <NavCell $w={99} $pl={25} $line>
              <AwsMark>
                <AwsWord>aws</AwsWord>
                <AwsSmile />
              </AwsMark>
            </NavCell>
            <NavCell $w={73} $pl={23} $pt={5}>
              <svg width="25" height="24" viewBox="0 0 25 24" fill="#ebebf0">
                {[0, 9, 18].map((y) => [0, 9.3, 18.6].map((x) => <rect key={x + "-" + y} x={x} y={y} width="6.200" height="6" rx="1" />))}
              </svg>
            </NavCell>
            <GlobalSearch>
              <SearchLeft>
                <NavCell $w={24} $pt={4}><SearchIcon /></NavCell>
                <Text $size={22.5} $weight={300} $italic>검색</Text>
              </SearchLeft>
              <Text $size={21} $ls={0.5}>[알트+S]</Text>
            </GlobalSearch>
            <Spacer />
            <NavCell $w={50} $pt={5} $line><ShellIcon /></NavCell>
            <NavCell $w={74} $pl={24} $pt={5} $line><BellIcon /></NavCell>
            <NavCell $w={73} $pl={25} $pt={5} $line><HelpIcon /></NavCell>
            <NavCell $w={75} $pl={24} $pt={3} $line><GearIcon /></NavCell>
            <NavCell $w={239} $pl={25} $line>
              <NavLabel $w={173}><Text $size={19.5}>아시아 태평양 (서울)</Text></NavLabel>
              <NavCell $w={16} $pt={11}><Triangle w={14} h={11} /></NavCell>
            </NavCell>
            <NavCell $w={146} $pl={25}>
              <NavLabel $w={80}><Text $size={18}>juju199a</Text></NavLabel>
              <NavCell $w={16} $pt={11}><Triangle w={14} h={11} /></NavCell>
            </NavCell>
          </TopNav>

          <CrumbBar>
            <svg width="22" height="18" viewBox="0 0 22 18" fill="#424650">
              <path d="M0 0h22v3H0ZM0 7.500h22v3H0ZM0 15h22v3H0Z" />
            </svg>
            <Crumbs>
              <Slot $w={125}><CrumbLink>Amazon S3</CrumbLink></Slot>
              <Slot $w={30}><Chevron /></Slot>
              <Slot $w={60}><CrumbLink>{mixed("버킷")}</CrumbLink></Slot>
              <Slot $w={30}><Chevron /></Slot>
              <Text $weight={700} $color="#656871" $ls={0.15}>juju199a-koreait-website-123</Text>
            </Crumbs>
            <Spacer />
            <Slot $w={24} $color="#424650"><InfoIcon /></Slot>
            <ToolDivider />
            <Slot $w={57} $color="#424650"><NotebookIcon /></Slot>
            <Slot $w={24} $color="#424650"><HexIcon /></Slot>
          </CrumbBar>

          <Content>
            <TitleRow>
              <Text $size={34} $weight={700} $lh={44} $ls={-0.32}>juju199a-koreait-website-123</Text>
              <Text $size={19.5} $weight={700} $color="#006ce0" $lh={24}>정보</Text>
            </TitleRow>
            <Tabs>
              {tabs.map((t, i) => (
                <Tab key={t} $first={i === 0}>
                  <TabLabel $w={i ? 109 : 107} $pl={i ? 30 : 28} $last={i === 5}>
                    <Text $size={25.5} $weight={700} $lh={39} $color={i ? "#424650" : "#006ce0"}>{t}</Text>
                  </TabLabel>
                  {i === 0 && <TabBar />}
                </Tab>
              ))}
            </Tabs>

            <Card>
              <CardHead>
                <CardTitle>
                  <Slot $w={66}><Text $size={31.5} $weight={700} $lh={42}>객체</Text></Slot>
                  <Slot $w={47}><Text $size={30} $color="#656871" $lh={42}>(4)</Text></Slot>
                  <Text $size={19.5} $weight={700} $color="#006ce0" $lh={24}>정보</Text>
                </CardTitle>
                <Actions>
                  <Button $w={48} $tone="normal"><RefreshIcon /></Button>
                  <Button $w={209} $tone="disabled" $icon="left"><CopyIcon /><Label $weight={700} $ls={0.4}>S3 URI 복사</Label></Button>
                  <Button $w={184} $tone="disabled" $icon="left"><CopyIcon /><Label $weight={700} $ls={0.3}>URL 복사</Label></Button>
                  <Button $w={181} $tone="disabled" $icon="left"><DownloadIcon /><Label $weight={700}>다운로드</Label></Button>
                  <Button $w={138} $tone="disabled" $icon="right"><Label $weight={700}>열기</Label><ExternalIcon /></Button>
                  <Button $w={108} $tone="disabled"><Label $weight={700}>삭제</Label></Button>
                  <Button $w={139} $tone="normal" $icon="right" $gap={18}><Label $weight={700}>작업</Label><Triangle w={17} h={13} /></Button>
                  <Button $w={177} $tone="normal"><Label $weight={700}>폴더 만들기</Label></Button>
                  <Button $w={159} $tone="primary" $icon="left"><UploadIcon /><Label $weight={700}>업로드</Label></Button>
                </Actions>
              </CardHead>
              <Desc>
                <Label $ls={0.3}>객체는 Amazon S3에 저장되어 있는 기본 엔터티입니다.</Label>
                <DescLink>{mixed("Amazon S3 인벤토리")}</DescLink>
                <Slot $w={24} $h={28} $color="#006ce0"><ExternalIcon /></Slot>
                <Label>를 사용하여 버킷에 있는 모든 객체의 목록을 얻을 수 있습니다. 다른 사용자가 객체에 액세스할 수 있게 하려면 명시적으로 권한을 부여해야 합니다.</Label>
                <DescLink>{mixed("자세히 알아보기")}</DescLink>
                <Slot $w={24} $h={28} $color="#006ce0"><ExternalIcon /></Slot>
              </Desc>
              <FilterRow>
                <FilterInput>
                  <SearchIcon />
                  <Label $italic>접두사로 객체 찾기</Label>
                </FilterInput>
                <Spacer />
                <Slot $w={42}><Chevron left color="#b4b4bb" s={23} /></Slot>
                <Slot $w={42}><Text $weight={700}>1</Text></Slot>
                <Slot $w={13}><Chevron color="#b4b4bb" s={23} /></Slot>
                <PageDivider />
                <GearSlot><GearIcon /></GearSlot>
              </FilterRow>
              <HeadRow>
                <HeadCell $check><Checkbox /></HeadCell>
                {columns.map((c, i) => (
                  <HeadCell key={c} $active={i === 0} $last={i === 4}>
                    <HeadText><Label $weight={700}>{c}</Label></HeadText>
                    <Triangle up={i === 0} open={i !== 0} />
                  </HeadCell>
                ))}
              </HeadRow>
              {files.map((f, i) => (
                <Row key={f.name} $h={f.h} $pt={f.pt} $last={i === 3}>
                  <Cell $check><Checkbox /></Cell>
                  <Cell><FileIcon /><FileLink>{f.name}</FileLink></Cell>
                  <Cell><Text $ls={0.3}>{f.type}</Text></Cell>
                  <Cell><Text $ls={0.5}>{f.date}</Text></Cell>
                  <Cell $end><Text $ls={0.3}>{f.size}</Text></Cell>
                  <Cell><Text $ls={0.1}>Standard</Text></Cell>
                </Row>
              ))}
            </Card>
          </Content>

          <Footer>
            <Slot $w={31}><ShellIcon /></Slot>
            <Slot $w={126}><Text $size={18}>CloudShell</Text></Slot>
            <Text $size={19.2} $weight={300}>의견</Text>
            <Spacer />
            <Slot $w={436}><Text $size={18} $color="#c6c6cd">© 2025, Amazon Web Services, Inc. 또는 계열사.</Text></Slot>
            <Slot $w={155}><Text $size={19.2}>개인 정보 보호</Text></Slot>
            <Slot $w={73}><Text $size={19.2}>약관</Text></Slot>
            <Slot $w={141}><Text $size={19.2}>쿠키 기본 설정</Text></Slot>
          </Footer>
        </Page>
        <Scrollbar>
          <svg width="14" height="3" viewBox="0 0 14 3"><path d="M4 0h6l3 3H1Z" fill="#a3a3a3" /></svg>
          <ScrollThumb />
          <svg width="12" height="7" viewBox="0 0 12 7"><path d="M0 0h12L6 7Z" fill="#505050" /></svg>
        </Scrollbar>
      </Browser>

      <Taskbar>
        <StartSlot><WindowsIcon /></StartSlot>
        <TaskSearch>
          <Slot $w={41}>
            <svg width="24" height="24" viewBox="0 0 24 24" fill="none" stroke="#222" strokeWidth="2.300">
              <circle cx="10.500" cy="10.500" r="8.800" />
              <path d="m16.800 16.800 6 6" strokeWidth="3" />
            </svg>
          </Slot>
          <Slot $w={192}><Text $size={21} $weight={300} $color="#4a4a4a">검색</Text></Slot>
          <FishingArt />
        </TaskSearch>
        <SearchGap />
        {apps.map(({ id, Icon, running, active }) => (
          <AppCell key={id}>
            <AppTile $active={active}>
              <Icon />
              {running && <Indicator $active={active} />}
            </AppTile>
          </AppCell>
        ))}
        <Tray>
          <TrayItem $pt={30} $mr={29}>
            <svg width="16" height="10" viewBox="0 0 16 10" fill="none" stroke="currentColor" strokeWidth="2"><path d="M1 9 8 2l7 7" /></svg>
          </TrayItem>
          <TrayItem $pt={20} $mr={35}><Text $size={24} $weight={300}>가</Text></TrayItem>
          <TrayItem $pt={20} $mr={34}><Text $size={24} $weight={300}>한</Text></TrayItem>
          <TrayItem $pt={25} $mr={12}><WifiIcon /></TrayItem>
          <TrayItem $pt={25} $mr={12}><MuteIcon /></TrayItem>
          <TrayItem $pt={22} $mr={23}><BatteryIcon /></TrayItem>
          <Clock>
            <Text $size={18} $lh={24}>오후 4:56</Text>
            <Text $size={18} $lh={24}>2025-01-11</Text>
          </Clock>
        </Tray>
      </Taskbar>
    </Desktop>
  );
}
